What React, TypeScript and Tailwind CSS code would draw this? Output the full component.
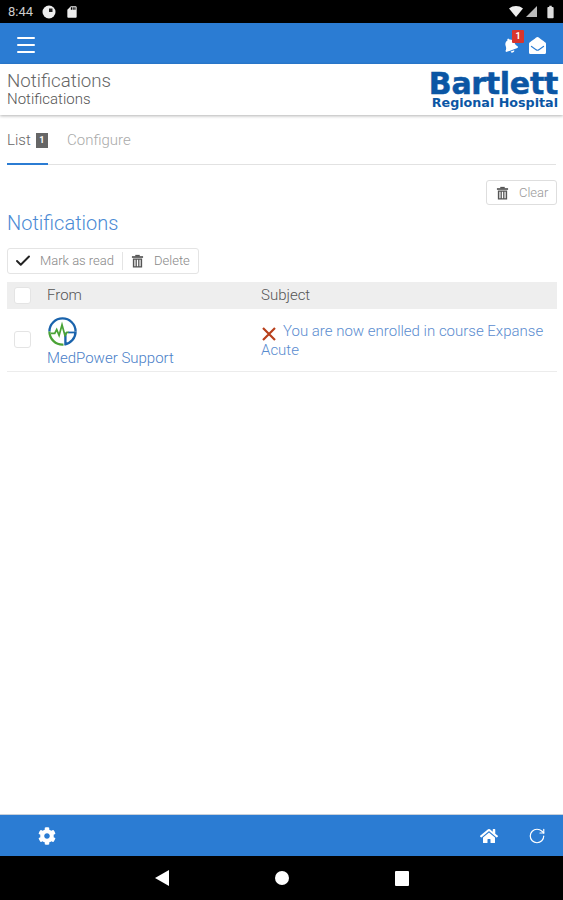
import React from "react";
import { Menu, Check, RotateCw } from "lucide-react";
import { FaBell, FaEnvelopeOpen, FaHome, FaCog } from "react-icons/fa";
import { MdBatteryFull, MdSdCard } from "react-icons/md";

function Trash({ className }: { className?: string }) {
  return (
    <svg viewBox="0 0 14 14" className={className} fill="#555">
      <rect x="1" y="1.8" width="12" height="1.8" />
      <rect x="4.6" y="0.4" width="4.8" height="1.8" />
      <path d="M2 4.2h10V14H2z M3.6 5.6v7h1.3v-7z M6.3 5.6v7h1.4v-7z M9.1 5.6v7h1.3v-7z" fillRule="evenodd" />
    </svg>
  );
}

function Box() {
  return <div className="w-[17px] h-[17px] rounded-[3px] bg-white border border-[#e4e4e4] shrink-0" />;
}

export default function App() {
  return (
    <div className="w-[563px] h-[900px] flex flex-col bg-white overflow-hidden font-['Roboto',sans-serif] font-light text-[#555]">
      <div className="h-[23px] bg-black flex items-center justify-between pl-[8px] pr-[5px] text-white shrink-0">
        <div className="flex items-center gap-[9px]">
          <span className="text-[13px] font-normal text-[#ccc] leading-none">8:44</span>
          <svg viewBox="0 0 14 14" className="w-[14px] h-[14px]">
            <circle cx="7" cy="7" r="6.5" fill="#eee" />
            <path d="M7 3.5h3.5v3.5H7z" fill="#222" />
          </svg>
          <MdSdCard className="w-[14px] h-[14px] text-[#eee]" />
        </div>
        <div className="flex items-center gap-[3px]">
          <svg viewBox="0 0 14 11" className="w-[14px] h-[11px]"><path d="M0 2.5C4 -0.8 10 -0.8 14 2.5L7 11z" fill="#eee" /></svg>
          <svg viewBox="0 0 11 11" className="w-[11px] h-[11px]"><path d="M0 11 11 0v11z" fill="#bbb" /></svg>
          <MdBatteryFull className="w-[15px] h-[16px] text-[#ddd] ml-[3px]" />
        </div>
      </div>

      <div className="h-[41px] bg-[#2b7cd3] flex items-center justify-between pl-[14px] pr-[17px] pt-[3px] shrink-0">
        <Menu className="w-[24px] h-[24px] text-white" strokeWidth={2} />
        <div className="flex items-center gap-[11px]">
          <div className="relative">
            <FaBell className="w-[15px] h-[15px] text-white -rotate-[20deg]" />
            <span className="absolute -top-[8px] left-[9px] w-[12px] h-[13px] bg-[#d9352c] text-white text-[9px] font-bold leading-[13px] text-center rounded-[1px]">1</span>
          </div>
          <FaEnvelopeOpen className="w-[17px] h-[17px] text-white" />
        </div>
      </div>

      <div className="h-[51px] flex items-center justify-between pl-[7px] pr-[5px] shadow-[0_1px_3px_rgba(0,0,0,0.3)] shrink-0">
        <div className="flex flex-col">
          <span className="text-[18.7px] leading-[20px] text-[#666]">Notifications</span>
          <span className="text-[15px] leading-[17px] text-[#555]">Notifications</span>
        </div>
        <div className="flex flex-col items-end text-[#0b56a4] font-['DejaVu_Sans',sans-serif] font-bold">
          <span className="text-[30px] leading-[27px] tracking-[-0.3px] [-webkit-text-stroke:0.5px_#0b56a4]">Bartlett</span>
          <span className="text-[12.7px] leading-[12px]">Regional Hospital</span>
        </div>
      </div>

      <div className="mx-[7px] h-[50px] border-b border-[#e2e2e2] flex items-end gap-[19px] shrink-0">
        <div className="h-[50px] flex items-center gap-[5px] border-b-2 border-[#2b7cd3] -mb-px pt-[3px] w-[41px]">
          <span className="text-[15px] text-[#666]">List</span>
          <span className="w-[12px] h-[15px] bg-[#666] text-white text-[9px] font-bold leading-[15px] text-center">1</span>
        </div>
        <div className="h-[50px] flex items-center pt-[3px] text-[15px] text-[#aaa]">Configure</div>
      </div>

      <div className="flex justify-end pr-[6px] pt-[15px] shrink-0">
        <button className="w-[71px] h-[25px] rounded-[3px] border border-[#dedede] flex items-center gap-[10px] pl-[9px] text-[13px] text-[#999]">
          <Trash className="w-[13px] h-[14px]" />
          <span>Clear</span>
        </button>
      </div>

      <h2 className="pl-[7px] pt-[3px] text-[20px] leading-[30px] text-[#4a8ad4] font-light shrink-0">Notifications</h2>

      <div className="ml-[7px] mt-[10px] w-[192px] h-[26px] rounded-[3px] border border-[#e4e4e4] flex items-center text-[13px] text-[#888] shrink-0">
        <Check className="w-[18px] h-[18px] text-[#222] ml-[6px]" strokeWidth={2.6} />
        <span className="ml-[8px] w-[74px] whitespace-nowrap">Mark as read</span>
        <span className="w-px h-[18px] bg-[#e4e4e4] ml-[8px]" />
        <Trash className="w-[13px] h-[14px] ml-[8px]" />
        <span className="ml-[10px]">Delete</span>
      </div>

      <div className="ml-[7px] mr-[6px] mt-[8px] h-[27px] bg-[#eeeeee] flex items-center text-[15px] text-[#555] shrink-0">
        <div className="w-[40px] pl-[7px]"><Box /></div>
        <div className="w-[214px]">From</div>
        <div>Subject</div>
      </div>

      <div className="ml-[7px] mr-[6px] h-[63px] border-b border-[#ececec] flex shrink-0">
        <div className="w-[40px] pl-[7px] pt-[22px]"><Box /></div>
        <div className="w-[214px] pt-[7px] flex flex-col items-start">
          <svg viewBox="0 0 32 32" className="w-[31px] h-[31px]" fill="none">
            <path d="M2.5 16A13.5 13.5 0 0 1 29.5 16" stroke="#1a63ac" strokeWidth="2.4" />
            <path d="M2.5 16A13.5 13.5 0 0 0 17 29.5" stroke="#4aa336" strokeWidth="2.4" />
            <path d="M18 29.4A13.5 13.5 0 0 0 29.5 16 M19 17v13" stroke="#1a63ac" strokeWidth="2.4" />
            <path d="M4 18h4l2-4 2.5 6 3-11 3 11 2-3h2" stroke="#4aa336" strokeWidth="1.8" />
            <path d="M22 17h7" stroke="#1a63ac" strokeWidth="1.8" />
          </svg>
          <span className="text-[15px] leading-[22px] text-[#4a80c8]">MedPower Support</span>
        </div>
        <div className="flex-1 pt-[13px] pr-[8px] text-[15px] leading-[19px] text-[#5a8ccf]">
          <svg viewBox="0 0 14 14" className="inline-block w-[14px] h-[14px] ml-px mr-[7px] -mb-[3px]" fill="none">
            <path d="M1 1 13 13 M13 1 1 13" stroke="#b8401c" strokeWidth="2.2" />
          </svg>
          You are now enrolled in course Expanse Acute
        </div>
      </div>

      <div className="flex-1" />

      <div className="h-[42px] bg-[#2b7cd3] border-t border-[#c8d0da] flex items-center justify-between pl-[38px] pr-[17px] shrink-0">
        <FaCog className="w-[18px] h-[18px] text-white" />
        <div className="flex items-center gap-[30px]">
          <FaHome className="w-[18px] h-[18px] text-white" />
          <RotateCw className="w-[18px] h-[18px] text-white" strokeWidth={1.6} />
        </div>
      </div>

      <div className="h-[44px] bg-black flex items-center justify-center gap-[106px] pl-[1px] shrink-0">
        <svg viewBox="0 0 14 16" className="w-[14px] h-[16px]"><path d="M0 8 14 0v16z" fill="#fff" /></svg>
        <span className="w-[14px] h-[14px] rounded-full bg-white" />
        <span className="w-[14px] h-[15px] rounded-[1px] bg-white" />
      </div>
    </div>
  );
}
